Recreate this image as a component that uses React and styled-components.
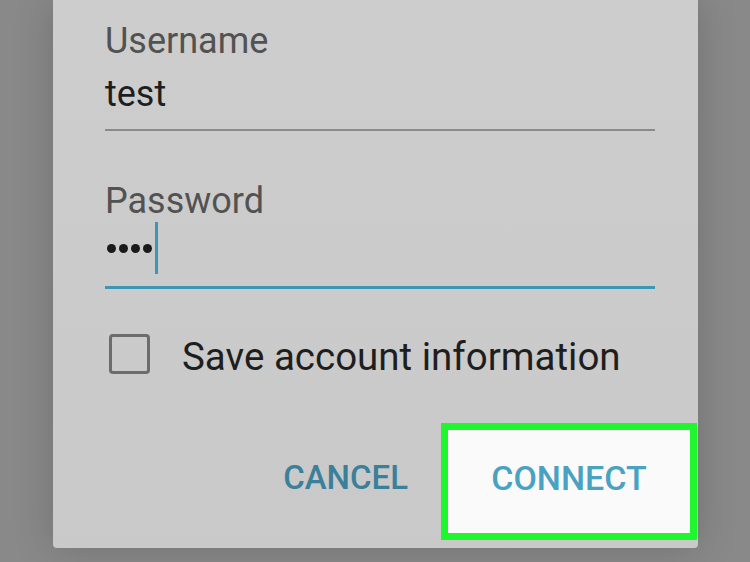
import React from 'react';
import styled, { createGlobalStyle } from 'styled-components';

const GlobalStyle = createGlobalStyle`
  html, body {
    margin: 0;
    padding: 0;
    width: 750px;
    height: 562px;
    overflow: hidden;
    background: #898989;
    font-family: Roboto, "Noto Sans", sans-serif;
  }
`;

const App = () => {
  return (
    <>
      <GlobalStyle />
      <Screen>
        <Dialog>
          <FieldLabel>Username</FieldLabel>
          <FieldValue>test</FieldValue>
          <Underline />

          <FieldLabel spaced>Password</FieldLabel>
          <InputRow>
            <Dot />
            <Dot />
            <Dot />
            <Dot />
            <Cursor />
          </InputRow>
          <Underline focused />

          <CheckRow>
            <CheckBox />
            <CheckText>Save account information</CheckText>
          </CheckRow>

          <ButtonBar>
            <TextButton>CANCEL</TextButton>
            <HighlightButton>CONNECT</HighlightButton>
          </ButtonBar>
        </Dialog>
      </Screen>
    </>
  );
};

const Screen = styled.div`
  width: 750px;
  height: 562px;
  background: #898989;
`;

const Dialog = styled.div`
  box-sizing: border-box;
  margin-left: 53px;
  width: 645px;
  height: 548px;
  padding: 20px 43px 0 52px;
  display: flex;
  flex-direction: column;
  background: linear-gradient(#cdcdcd, #c9c9c9);
  border-radius: 0 0 4px 4px;
  box-shadow: 0 0 40px rgba(0, 0, 0, 0.18);
`;

const FieldLabel = styled.div`
  font-size: 36px;
  line-height: 42px;
  color: #525252;
  margin-top: ${(p) => (p.spaced ? '49px' : '0')};
`;

const FieldValue = styled.div`
  font-size: 36px;
  line-height: 42px;
  color: #1e1e1e;
  margin-top: 11px;
`;

const Underline = styled.div`
  height: ${(p) => (p.focused ? '3px' : '2px')};
  background: ${(p) => (p.focused ? '#3f96b4' : '#8b8b8b')};
  margin-top: ${(p) => (p.focused ? '12px' : '14px')};
`;

const InputRow = styled.div`
  display: flex;
  align-items: center;
  gap: 3px;
  height: 52px;
  padding-left: 2px;
`;

const Dot = styled.span`
  width: 9px;
  height: 9px;
  border-radius: 50%;
  background: #1a1a1a;
`;

const Cursor = styled.span`
  width: 3px;
  height: 52px;
  background: #3f96b4;
`;

const CheckRow = styled.div`
  display: flex;
  align-items: center;
  gap: 32px;
  margin-top: 45px;
  height: 40px;
`;

const CheckBox = styled.span`
  box-sizing: border-box;
  width: 41px;
  height: 40px;
  margin-left: 4px;
  border: 3px solid #6c6c6c;
  border-radius: 4px;
`;

const CheckText = styled.span`
  font-size: 38.5px;
  line-height: 40px;
  margin-top: 5px;
  color: #1e1e1e;
`;

const ButtonBar = styled.div`
  display: flex;
  justify-content: flex-end;
  align-items: center;
  gap: 33px;
  margin-top: 49px;
  margin-right: -42px;
`;

const TextButton = styled.button`
  background: none;
  border: none;
  padding: 0;
  margin-bottom: 9px;
  font-family: Roboto, sans-serif;
  font-weight: 500;
  font-size: 33px;
  line-height: 33px;
  color: #3a809a;
`;

const HighlightButton = styled.button`
  box-sizing: border-box;
  width: 256px;
  height: 117px;
  padding: 0 0 8px 0;
  border: 7px solid #1ef62d;
  background: #fafafa;
  font-family: Roboto, sans-serif;
  font-weight: 500;
  font-size: 34px;
  line-height: 34px;
  color: #4aa2c2;
`;

export default App;
